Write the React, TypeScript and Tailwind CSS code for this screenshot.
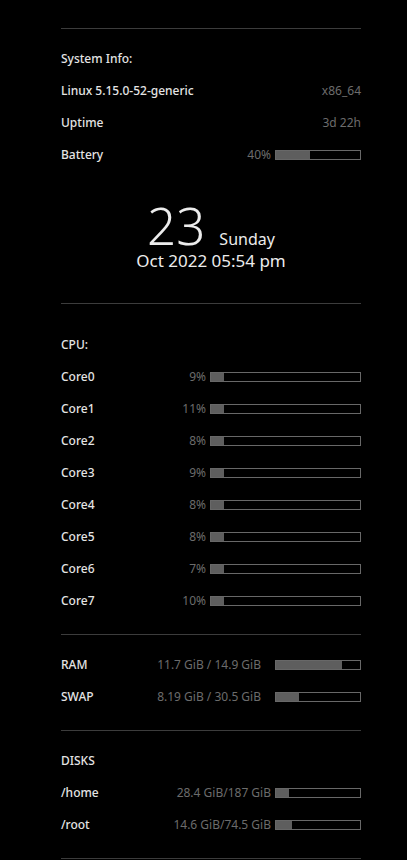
import React from "react";

const cores = [
  { name: "Core0", pct: 9 },
  { name: "Core1", pct: 11 },
  { name: "Core2", pct: 8 },
  { name: "Core3", pct: 9 },
  { name: "Core4", pct: 8 },
  { name: "Core5", pct: 8 },
  { name: "Core6", pct: 7 },
  { name: "Core7", pct: 10 },
];

const memory = [
  { name: "RAM", value: "11.7 GiB / 14.9 GiB", pct: 78.5 },
  { name: "SWAP", value: "8.19 GiB / 30.5 GiB", pct: 26.9 },
];

const disks = [
  { name: "/home", value: "28.4 GiB/187 GiB", pct: 15.2 },
  { name: "/root", value: "14.6 GiB/74.5 GiB", pct: 19.6 },
];

function Bar({ pct, width }: { pct: number; width: string }) {
  return (
    <div className={`${width} h-[10px] border border-[#686868] bg-black`}>
      <div className="h-full bg-[#5e5e5e]" style={{ width: `${pct}%` }} />
    </div>
  );
}

function Row({ children }: { children: React.ReactNode }) {
  return <div className="flex h-8 items-center pt-[2px]">{children}</div>;
}

function Label({ text }: { text: string }) {
  return <span className="flex-1 text-[12px] font-medium text-[#e4e4e4]">{text}</span>;
}

function Divider() {
  return <div className="h-px bg-[#3c3c3c]" />;
}

export default function App() {
  return (
    <div
      className="min-h-[860px] w-[407px] bg-black pt-[28px]"
      style={{ fontFamily: '"Noto Sans", "Open Sans", sans-serif' }}
    >
      <div className="mx-[61px] w-[300px]">
        <Divider />

        {/* system info */}
        <div className="pt-[13px]">
          <Row>
            <Label text="System Info:" />
          </Row>
          <Row>
            <Label text="Linux 5.15.0-52-generic" />
            <span className="text-[12px] text-[#6c6c6c]">x86_64</span>
          </Row>
          <Row>
            <Label text="Uptime" />
            <span className="text-[12px] text-[#6c6c6c]">3d 22h</span>
          </Row>
          <Row>
            <Label text="Battery" />
            <span className="mr-1 text-[12px] text-[#6c6c6c]">40%</span>
            <Bar pct={40} width="w-[86px]" />
          </Row>
        </div>

        {/* clock */}
        <div className="flex h-[133px] flex-col items-center pt-[30px] text-[#ececec]">
          <div className="flex h-[50px] items-baseline gap-[14px]">
            <span className="text-[51px] font-light leading-[50px]">23</span>
            <span className="text-[16px] leading-[20px]">Sunday</span>
          </div>
          <div className="text-[17px] leading-[22px]">Oct 2022 05:54 pm</div>
        </div>

        <Divider />

        {/* cpu */}
        <div className="pt-[24px] pb-[18px]">
          <Row>
            <Label text="CPU:" />
          </Row>
          {cores.map((c) => (
            <Row key={c.name}>
              <Label text={c.name} />
              <span className="mr-1 text-[12px] text-[#6c6c6c]">{c.pct}%</span>
              <Bar pct={8.5} width="w-[151px]" />
            </Row>
          ))}
        </div>

        <Divider />

        {/* memory */}
        <div className="pt-[13px] pb-[18px]">
          {memory.map((m) => (
            <Row key={m.name}>
              <Label text={m.name} />
              <span className="mr-[14px] text-[12px] text-[#6c6c6c]">{m.value}</span>
              <Bar pct={m.pct} width="w-[86px]" />
            </Row>
          ))}
        </div>

        <Divider />

        {/* disks */}
        <div className="pt-[13px] pb-[18px]">
          <Row>
            <Label text="DISKS" />
          </Row>
          {disks.map((d) => (
            <Row key={d.name}>
              <Label text={d.name} />
              <span className="mr-1 text-[12px] text-[#6c6c6c]">{d.value}</span>
              <Bar pct={d.pct} width="w-[86px]" />
            </Row>
          ))}
        </div>

        <Divider />
      </div>
    </div>
  );
}
